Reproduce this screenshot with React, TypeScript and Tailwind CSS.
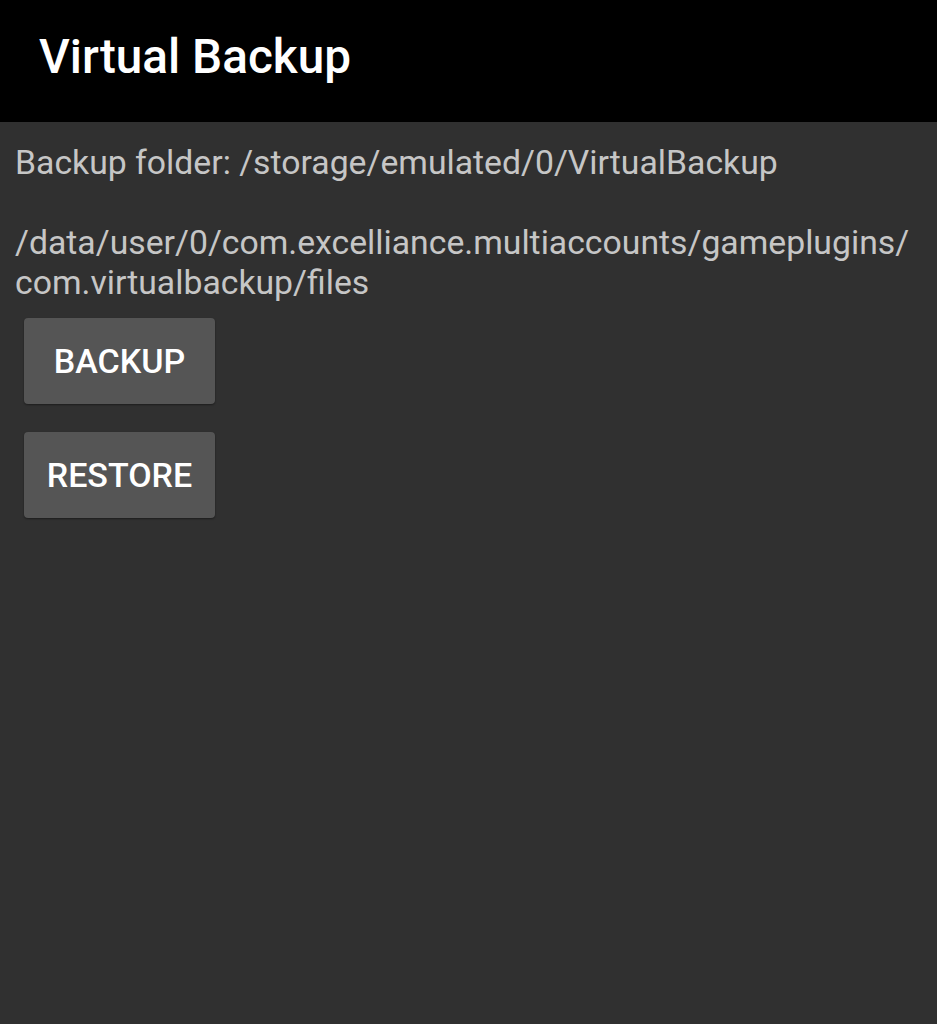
export default function App() {
  return (
    <div className="w-[937px] h-[1024px] bg-[#303030] flex flex-col" style={{ fontFamily: "Roboto, 'Liberation Sans', sans-serif" }}>
      <div className="h-[122px] bg-black flex items-center pl-[39px] shrink-0">
        <span className="text-white text-[47.7px] font-medium leading-none pb-[7px]">Virtual Backup</span>
      </div>
      <div className="pt-[21px] px-[15px] text-[#c6c6c6] text-[33.75px] leading-[40px] whitespace-pre-wrap">
        {"Backup folder: /storage/emulated/0/VirtualBackup\n\n/data/user/0/com.excelliance.multiaccounts/gameplugins/\ncom.virtualbackup/files"}
      </div>
      <div className="flex flex-col gap-[28px] pl-[24px] pt-[15px]">
        <button className="w-[191px] h-[86px] bg-[#555555] rounded-[4px] text-white text-[34px] font-medium shadow-[0_1px_2px_rgba(0,0,0,0.4)]">BACKUP</button>
        <button className="w-[191px] h-[86px] bg-[#555555] rounded-[4px] text-white text-[34px] font-medium shadow-[0_1px_2px_rgba(0,0,0,0.4)]">RESTORE</button>
      </div>
    </div>
  );
}
